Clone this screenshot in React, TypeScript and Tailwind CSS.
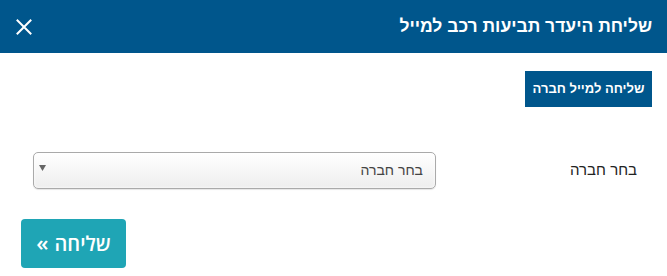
import React from "react";

export default function App() {
  return (
    <div dir="rtl" className="w-[667px] h-[276px] bg-white overflow-hidden" style={{ fontFamily: '"Open Sans", "Liberation Sans", Arial, sans-serif' }}>
      <div className="h-[53px] bg-[#00568c] flex items-center justify-between pr-[15px] pl-[15px]">
        <h1 className="text-white font-bold text-[17.5px] leading-none" style={{ fontFamily: '"Liberation Sans", Arial, sans-serif' }}>שליחת היעדר תביעות רכב למייל</h1>
        <svg width="16" height="16" viewBox="0 0 16 16" className="ml-[1px]">
          <path d="M1.5 1.5 L14.5 14.5 M14.5 1.5 L1.5 14.5" stroke="white" strokeWidth="2" strokeLinecap="square" fill="none" />
        </svg>
      </div>
      <div className="pr-[15px] pt-[18px]">
        <button className="h-[36px] w-[127px] bg-[#00568c] text-white font-bold text-[13px]" style={{ fontFamily: '"Liberation Sans", Arial, sans-serif' }}>שליחה למייל חברה</button>
      </div>
      <div className="flex items-center pr-[15px] mt-[45px]">
        <div className="w-[216px] pr-[15px] text-[15px] text-[#222]" style={{ fontFamily: '"Liberation Sans", Arial, sans-serif' }}>בחר חברה</div>
        <div className="w-[403px] h-[37px] rounded-[5px] border border-[#aaa] bg-gradient-to-b from-white to-[#eeeeee] flex items-center justify-between pr-[12px] pl-[5px] shadow-[inset_0_0_3px_white,0_1px_1px_rgba(0,0,0,0.1)]">
          <span className="text-[14px] text-[#444]" style={{ fontFamily: '"Liberation Sans", Arial, sans-serif' }}>בחר חברה</span>
          <svg width="7" height="6" viewBox="0 0 7 6" className="mb-[6px]">
            <path d="M0 0 L7 0 L3.5 6 Z" fill="#666" />
          </svg>
        </div>
      </div>
      <div className="flex justify-end pl-[21px] mt-[30px]">
        <button className="h-[49px] w-[105px] rounded-[4px] bg-[#1fa5b5] text-white text-[20px] font-semibold flex items-center justify-center gap-[6px]">
          <span>שליחה</span>
          <span className="text-[22px] leading-none mb-[3px]">»</span>
        </button>
      </div>
    </div>
  );
}
